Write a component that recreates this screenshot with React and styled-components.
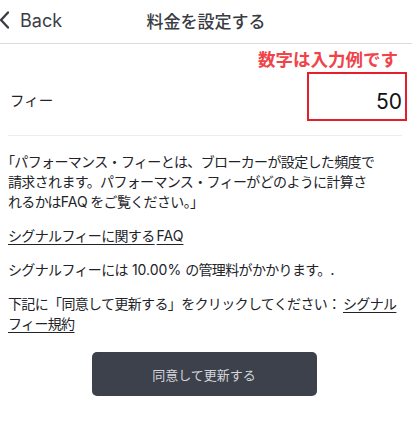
import React from "react";
import styled, { createGlobalStyle } from "styled-components";

const GlobalStyle = createGlobalStyle`
  body {
    margin: 0;
    background: #ffffff;
    font-family: Inter, "Noto Sans CJK JP", sans-serif;
    color: #222328;
  }
`;

const Page = styled.div`
  width: 412px;
  min-height: 427px;
  background: #ffffff;
`;

const Header = styled.div`
  position: relative;
  height: 43px;
  display: flex;
  align-items: center;
  justify-content: center;
  border-bottom: 1px solid #dcdcde;
`;

const BackButton = styled.div`
  position: absolute;
  left: 0;
  top: 0;
  height: 40px;
  display: flex;
  align-items: center;
  gap: 11px;
  color: #3b3e46;
  font-size: 18px;
  svg {
    display: block;
  }
`;

const Title = styled.div`
  font-family: "Noto Sans CJK JP", sans-serif;
  font-size: 17px;
  font-weight: 500;
  color: #3a3c44;
  margin-top: -3px;
`;

const Hint = styled.div`
  font-family: "Noto Sans CJK JP", sans-serif;
  font-weight: 700;
  font-size: 17.5px;
  line-height: 20px;
  color: #f0434a;
  text-align: right;
  padding: 5px 14px 0 0;
`;

const FeeRow = styled.div`
  display: flex;
  align-items: center;
  justify-content: space-between;
  padding: 3px 5px 0 10px;
`;

const FeeLabel = styled.div`
  font-family: "Noto Sans CJK JP", sans-serif;
  font-size: 14.5px;
  color: #222328;
  padding-top: 5px;
`;

const FeeBox = styled.div`
  box-sizing: border-box;
  width: 100px;
  height: 49px;
  border: 2.5px solid #e41f2b;
  display: flex;
  align-items: center;
  justify-content: flex-end;
  padding: 10px 3px 0 0;
  font-size: 21px;
  color: #111111;
`;

const Divider = styled.div`
  height: 1px;
  background: #ececee;
  margin: 14px 10px 0 8px;
`;

const Body = styled.div`
  padding: 15px 8px 0 8px;
  font-family: "Noto Sans CJK JP", sans-serif;
  font-size: 14px;
  letter-spacing: -0.65px;
  line-height: 20px;
  color: #222328;
`;

const Paragraph = styled.p`
  margin: 0 0 ${(props) => props.gap ?? 13}px 0;
  white-space: nowrap;
`;

const Link = styled.span`
  text-decoration: underline;
  text-underline-offset: 3px;
  text-decoration-thickness: 1px;
`;

const Num = styled.span`
  font-family: Inter, "Noto Sans CJK JP", sans-serif;
  letter-spacing: 0;
  margin: 0 ${(props) => props.space || 0}px;
`;

const OpenQuote = styled.span`
  font-feature-settings: "halt";
`;

const ButtonRow = styled.div`
  display: flex;
  justify-content: center;
  padding: 19px 0 0 0;
`;

const AgreeButton = styled.button`
  width: 225px;
  height: 44px;
  margin-left: -4px;
  border: none;
  border-radius: 5px;
  background: #3d414c;
  color: #d4d6da;
  font-family: "Noto Sans CJK JP", sans-serif;
  font-size: 13px;
`;

const ChevronLeft = () => (
  <svg width="9" height="18" viewBox="0 0 9 18">
    <polyline
      points="8,1.5 1,9 8,16.5"
      fill="none"
      stroke="#3b3e46"
      strokeWidth="2.4"
      strokeLinecap="round"
      strokeLinejoin="round"
    />
  </svg>
);

const App = () => {
  return (
    <Page>
      <GlobalStyle />
      <Header>
        <BackButton>
          <ChevronLeft />
          <span>Back</span>
        </BackButton>
        <Title>料金を設定する</Title>
      </Header>
      <Hint>数字は入力例です</Hint>
      <FeeRow>
        <FeeLabel>フィー</FeeLabel>
        <FeeBox>50</FeeBox>
      </FeeRow>
      <Divider />
      <Body>
        <Paragraph>
          <OpenQuote>「</OpenQuote>パフォーマンス・フィーとは、ブローカーが設定した頻度で
          <br />
          請求されます。パフォーマンス・フィーがどのように計算さ
          <br />
          れるかは<Num>FAQ</Num> をご覧ください。」
        </Paragraph>
        <Paragraph>
          <Link>
            シグナルフィーに関する<Num space={2}>FAQ</Num>
          </Link>
        </Paragraph>
        <Paragraph>
          シグナルフィーには<Num space={4}>10.00%</Num>の管理料がかかります。.
        </Paragraph>
        <Paragraph gap={0}>
          下記に「同意して更新する」をクリックしてください： <Link>シグナル</Link>
          <br />
          <Link>フィー規約</Link>
        </Paragraph>
      </Body>
      <ButtonRow>
        <AgreeButton>同意して更新する</AgreeButton>
      </ButtonRow>
    </Page>
  );
};

export default App;
